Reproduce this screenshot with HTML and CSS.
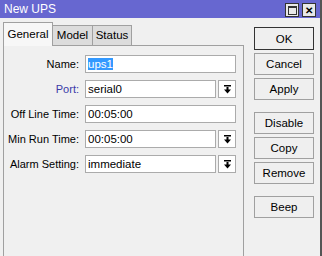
FILE: index.html
```html
<!DOCTYPE html>
<html lang="en">
<head>
  <meta charset="UTF-8" />
  <title>New UPS</title>
  <link rel="stylesheet" href="styles.css">
</head>
<body>
  <div class="window">
    <div class="titlebar">
      <span class="title">New UPS</span>
      <div class="tb-buttons">
        <span class="tb-btn"><span class="max-icon"></span></span>
        <span class="tb-btn close">&#x2715;</span>
      </div>
    </div>

    <div class="main">
      <div class="tabpane">
        <div class="tabs">
          <div class="tab active">General</div>
          <div class="tab model">Model</div>
          <div class="tab status">Status</div>
          <div class="tab-rest"></div>
        </div>
        <div class="panel">
          <div class="row">
            <label>Name:</label>
            <div class="field"><span class="selected">ups1</span></div>
          </div>
          <div class="row">
            <label class="link">Port:</label>
            <div class="field short">serial0</div>
            <span class="drop"><svg width="9" height="9" viewBox="0 0 9 9"><rect x="1" y="0" width="7" height="1.5" fill="#000"/><rect x="3.5" y="2" width="2" height="3" fill="#000"/><polygon points="1,4.5 8,4.5 4.5,8.5" fill="#000"/></svg></span>
          </div>
          <div class="row">
            <label>Off Line Time:</label>
            <div class="field">00:05:00</div>
          </div>
          <div class="row">
            <label>Min Run Time:</label>
            <div class="field short">00:05:00</div>
            <span class="drop"><svg width="9" height="9" viewBox="0 0 9 9"><rect x="1" y="0" width="7" height="1.5" fill="#000"/><rect x="3.5" y="2" width="2" height="3" fill="#000"/><polygon points="1,4.5 8,4.5 4.5,8.5" fill="#000"/></svg></span>
          </div>
          <div class="row">
            <label>Alarm Setting:</label>
            <div class="field short">immediate</div>
            <span class="drop"><svg width="9" height="9" viewBox="0 0 9 9"><rect x="1" y="0" width="7" height="1.5" fill="#000"/><rect x="3.5" y="2" width="2" height="3" fill="#000"/><polygon points="1,4.5 8,4.5 4.5,8.5" fill="#000"/></svg></span>
          </div>
        </div>
      </div>

      <div class="side">
        <button class="default">OK</button>
        <button>Cancel</button>
        <button>Apply</button>
        <button class="group">Disable</button>
        <button>Copy</button>
        <button>Remove</button>
        <button class="group">Beep</button>
      </div>
    </div>
  </div>
</body>
</html>
```

FILE: styles.css
```css
body {
  margin: 0;
  width: 322px;
  height: 256px;
  overflow: hidden;
  background-color: #f0f0f0;
  font-family: "Liberation Sans", Arial, sans-serif;
  font-size: 11px;
  color: #000;
}
.window {
  height: 256px;
  overflow: hidden;
  border-right: 2px solid #555;
  box-sizing: border-box;
}
.titlebar {
  height: 18px;
  background-color: #6767d0;
  display: flex;
  align-items: center;
  padding: 0 4px 0 4px;
}
.title {
  color: #fff;
  font-size: 12px;
}
.tb-buttons {
  margin-left: auto;
  display: flex;
  gap: 3px;
  margin-top: 2px;
}
.tb-btn {
  width: 12px;
  height: 12px;
  background-color: #e8e8e8;
  border: 1px solid #333;
  display: flex;
  align-items: center;
  justify-content: center;
  font-size: 10px;
  font-weight: bold;
}
.max-icon {
  width: 7px;
  height: 6px;
  border: 1px solid #333;
  border-top-width: 2px;
}
.main {
  display: flex;
  padding-left: 3px;
}
.tabpane {
  width: 241px;
  margin-top: 4px;
}
.tabs {
  display: flex;
  height: 23px;
}
.tab {
  box-sizing: border-box;
  margin-top: 3px;
  height: 20px;
  line-height: 19px;
  font-size: 11.5px;
  text-align: center;
  background-color: #dcdcdc;
  border: 1px solid #a0a0a0;
  border-bottom: none;
  border-left: none;
}
.tab.active {
  margin-top: 0;
  height: 24px;
  line-height: 22px;
  width: 50px;
  background-color: #f7f7f7;
  border-left: 1px solid #a0a0a0;
  position: relative;
  z-index: 1;
}
.tab.model {
  width: 40px;
}
.tab.status {
  width: 39px;
}
.tab-rest {
  flex: 1;
}
.panel {
  border: 1px solid #a0a0a0;
  height: 240px;
  padding-top: 9px;
  box-sizing: border-box;
  display: flex;
  flex-direction: column;
  gap: 7px;
}
.row {
  display: flex;
  align-items: center;
  height: 18px;
}
.row label {
  width: 75px;
  text-align: right;
  white-space: nowrap;
  font-size: 11px;
  margin-right: 6px;
}
.row label.link {
  color: #3a3aa8;
}
.field {
  box-sizing: border-box;
  width: 151px;
  height: 18px;
  background-color: #fff;
  border: 1px solid #ababab;
  padding-left: 2px;
  line-height: 16px;
  font-size: 11.5px;
}
.field.short {
  width: 131px;
}
.selected {
  background-color: #3399ff;
  color: #fff;
}
.drop {
  box-sizing: border-box;
  width: 18px;
  height: 18px;
  margin-left: 2px;
  background-color: #fff;
  border: 1px solid #ababab;
  display: flex;
  align-items: center;
  justify-content: center;
}
.side {
  display: flex;
  flex-direction: column;
  gap: 3px;
  margin-left: 10px;
  padding-top: 9px;
}
.side button {
  width: 60px;
  height: 22px;
  padding: 0;
  font-family: "Liberation Sans", Arial, sans-serif;
  font-size: 11.5px;
  color: #000;
  background-color: #efefef;
  border: 1px solid #a0a0a0;
  border-radius: 0;
}
.side button.default {
  height: 23px;
  border: 1px solid #333;
}
.side button.group {
  margin-top: 9px;
}
```
